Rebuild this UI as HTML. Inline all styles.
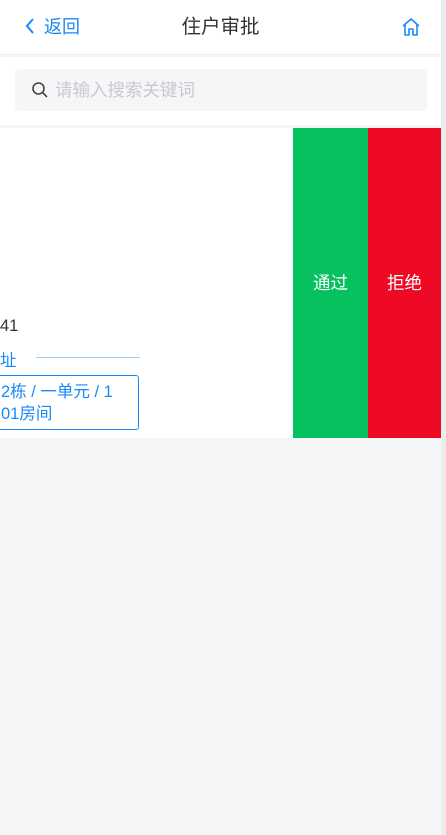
<!DOCTYPE html>
<html><head><meta charset="utf-8"><style>
*{margin:0;padding:0;box-sizing:border-box}
body{width:446px;height:835px;background:#f5f6f8;font-family:"Liberation Sans","Noto Sans CJK SC",sans-serif;position:relative;overflow:hidden}
.sb{position:absolute;right:0;top:0;width:5px;height:835px;background:#ececec}
.hd{position:absolute;left:0;top:0;width:441px;height:55px;background:#fff;border-bottom:1px solid #f0f0f0}
.back{position:absolute;left:24px;top:15px;color:#1989fa;font-size:18px;line-height:24px}
.title{position:absolute;left:0;width:441px;text-align:center;top:14px;font-size:19.5px;line-height:26px;color:#323233}
.srch{position:absolute;left:0;top:57px;width:441px;height:68px;background:#fff}
.inp{position:absolute;left:15px;top:12px;width:412px;height:42px;background:#f5f6f8;border-radius:3px}
.ph{position:absolute;left:40px;top:10px;font-size:17.5px;color:#c8c9cc;line-height:22px}
.card{position:absolute;left:0;top:128px;width:293px;height:310px;background:#fff}
.g{position:absolute;left:293px;top:128px;width:75px;height:310px;background:#07c160;color:#fff;font-size:17.5px;text-align:center;line-height:310px}
.r{position:absolute;left:368px;top:128px;width:73px;height:310px;background:#ee0a24;color:#fff;font-size:17.5px;text-align:center;line-height:310px}
</style></head><body>
<div class="sb"></div>
<div class="hd">
<div class="back"><svg width="12" height="18" viewBox="0 0 12 18" style="vertical-align:-2px;margin-right:8px"><path d="M9 2 L3 9 L9 16" fill="none" stroke="#1989fa" stroke-width="2"/></svg>返回</div>
<div class="title">住户审批</div>
<svg style="position:absolute;left:401px;top:17px" width="20" height="20" viewBox="0 0 20 20"><path d="M2 9 L10 2 L18 9 M4 7.5 V18 H8 V12 H12 V18 H16 V7.5" fill="none" stroke="#1989fa" stroke-width="1.6" stroke-linejoin="round"/></svg>
</div>
<div class="srch"><div class="inp">
<svg style="position:absolute;left:16px;top:12px" width="18" height="18" viewBox="0 0 18 18"><circle cx="7.5" cy="7.5" r="5.5" fill="none" stroke="#444" stroke-width="1.6"/><path d="M11.5 11.5 L16 16" stroke="#444" stroke-width="1.6"/></svg>
<div class="ph">请输入搜索关键词</div></div></div>
<div class="card">
<div style="position:absolute;left:0;top:189px;font-size:16.5px;color:#323233">41</div>
<div style="position:absolute;left:0;top:219px;font-size:16.5px;color:#1989fa">址</div>
<div style="position:absolute;left:36px;top:229px;width:104px;height:1px;background:#a0c8f5"></div>
<div style="position:absolute;left:-10px;top:247px;width:149px;height:55px;border:1px solid #1989fa;border-radius:3px;color:#1989fa;font-size:16.5px;line-height:22px;padding:5px 0 0 10px">2栋 / 一单元 / 1<br>01房间</div>
</div>
<div class="g">通过</div>
<div class="r">拒绝</div>
</body></html>
